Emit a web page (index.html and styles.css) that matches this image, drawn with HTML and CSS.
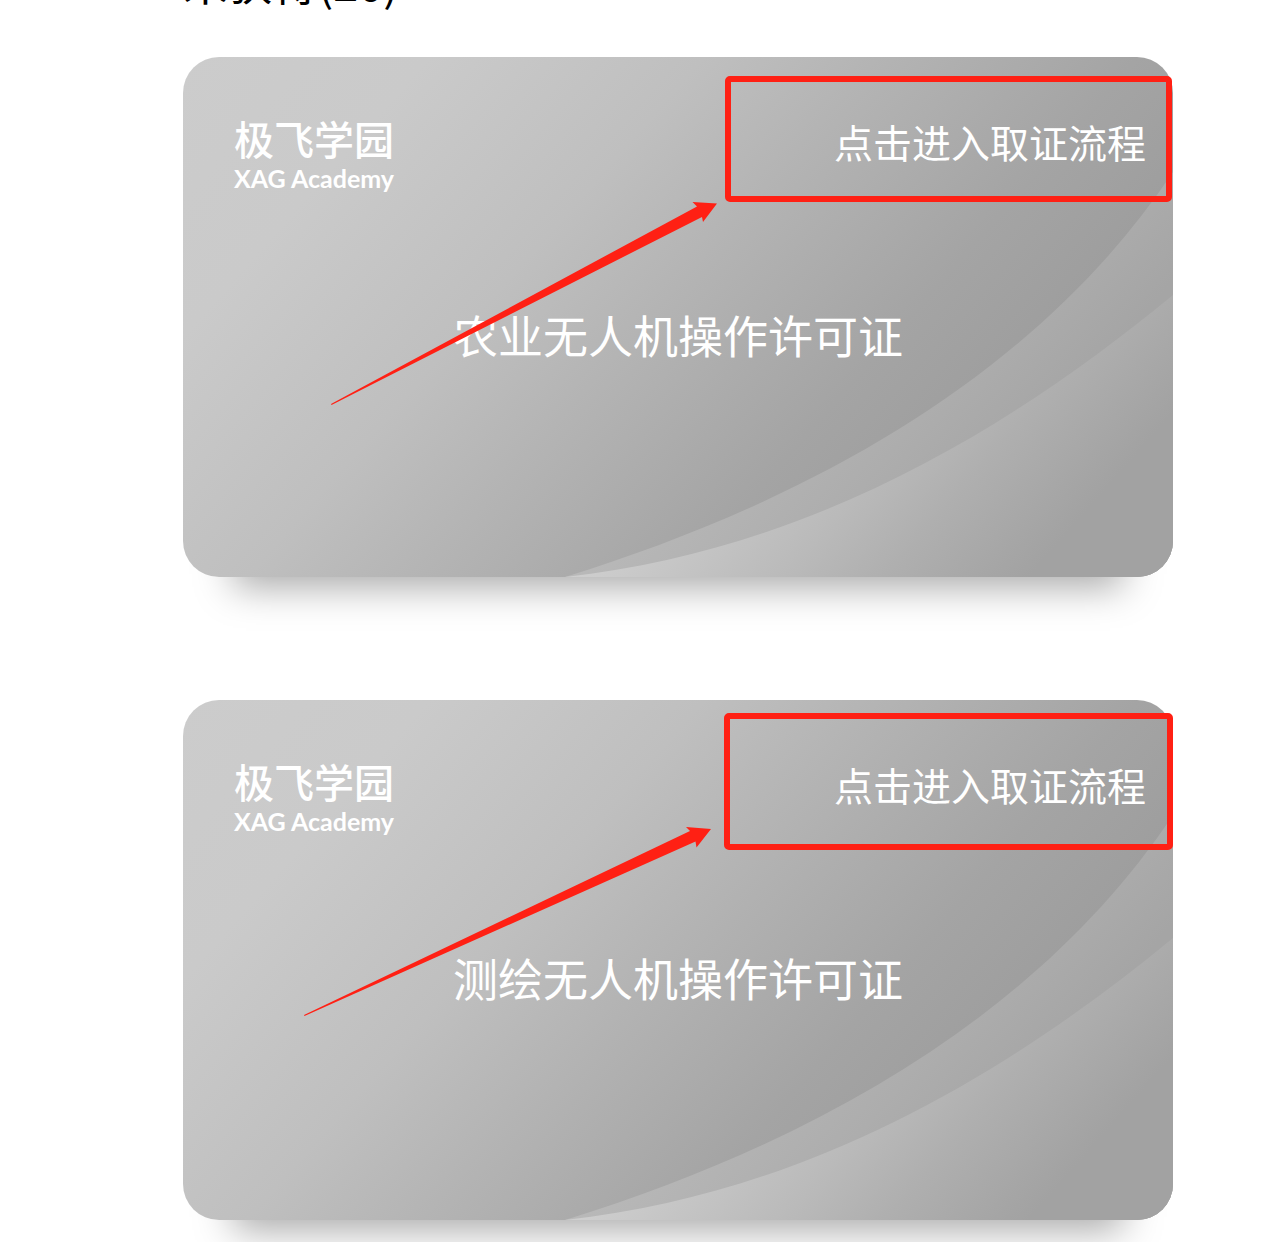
FILE: index.html
```html
<!DOCTYPE html>
<html lang="zh-CN">
<head>
<meta charset="utf-8">
<meta name="viewport" content="width=device-width, initial-scale=1">
<title>极飞学园</title>
<link rel="stylesheet" href="styles.css">
</head>
<body>
<main class="page">
  <header class="section-head"><h1 class="section-title">未获得(20)</h1></header>

  <article class="card">
    <svg class="card-art" viewBox="0 0 990 520" preserveAspectRatio="none" aria-hidden="true">
      <defs>
        <linearGradient id="base" gradientUnits="userSpaceOnUse" x1="0" y1="0" x2="816" y2="718">
          <stop offset="0" stop-color="#cccccc"/>
          <stop offset=".17" stop-color="#cacaca"/>
          <stop offset=".36" stop-color="#bfbfbf"/>
          <stop offset=".48" stop-color="#b4b4b4"/>
          <stop offset=".66" stop-color="#a4a4a4"/>
          <stop offset=".78" stop-color="#9d9d9d"/>
        </linearGradient>
        <linearGradient id="band" gradientUnits="userSpaceOnUse" x1="0" y1="0" x2="816" y2="718">
          <stop offset=".58" stop-color="#b9b9b9"/>
          <stop offset=".73" stop-color="#adadad"/>
          <stop offset=".82" stop-color="#a5a5a5"/>
        </linearGradient>
        <linearGradient id="corner" gradientUnits="userSpaceOnUse" x1="0" y1="0" x2="816" y2="718">
          <stop offset=".58" stop-color="#cfcfcf"/>
          <stop offset=".73" stop-color="#bababa"/>
          <stop offset=".8" stop-color="#afafaf"/>
          <stop offset=".9" stop-color="#a2a2a2"/>
        </linearGradient>
      </defs>
      <rect width="990" height="520" fill="url(#base)"/>
      <path d="M382 520C640 440 860 310 990 115V520Z" fill="url(#band)"/>
      <path d="M382 520C620 494 820 378 990 238V520Z" fill="url(#corner)"/>
    </svg>
    <div class="card-top">
      <div class="brand">
        <span class="brand-cn">极飞学园</span>
        <span class="brand-en">XAG Academy</span>
      </div>
      <a class="card-link" href="#agriculture">点击进入取证流程</a>
    </div>
    <h2 class="card-title">农业无人机操作许可证</h2>
    <svg class="marks" viewBox="0 0 990 520" preserveAspectRatio="none" aria-hidden="true">
      <rect class="mark-box" x="545" y="22" width="441" height="120" rx="2"/>
      <path class="mark-arrow" d="M148 347L514 149.500 509.500 145 534 146.500 520 165 519 160 148.500 348Z"/>
    </svg>
  </article>

  <article class="card">
    <svg class="card-art" viewBox="0 0 990 520" preserveAspectRatio="none" aria-hidden="true">
      <rect width="990" height="520" fill="url(#base)"/>
      <path d="M382 520C640 440 860 310 990 115V520Z" fill="url(#band)"/>
      <path d="M382 520C620 494 820 378 990 238V520Z" fill="url(#corner)"/>
    </svg>
    <div class="card-top">
      <div class="brand">
        <span class="brand-cn">极飞学园</span>
        <span class="brand-en">XAG Academy</span>
      </div>
      <a class="card-link" href="#mapping">点击进入取证流程</a>
    </div>
    <h2 class="card-title">测绘无人机操作许可证</h2>
    <svg class="marks" viewBox="0 0 990 520" preserveAspectRatio="none" aria-hidden="true">
      <rect class="mark-box" x="544" y="16" width="443" height="131" rx="2"/>
      <path class="mark-arrow" d="M121 315L507 131 503 127 528 129 513.500 147.500 512.500 141.500 121.500 316Z"/>
    </svg>
  </article>
</main>
</body>
</html>
```
FILE: styles.css
```css
* {
  box-sizing: border-box;
}

body {
  margin: 0;
  background: #fff;
  color: #000;
  font-family: "Noto Sans CJK SC", sans-serif;
}

.page {
  padding: 0 112px 40px 183px;
}

/* The list is scrolled, so only the foot of the heading shows */
.section-head {
  display: flex;
  align-items: flex-end;
  height: 14px;
  margin-bottom: 43px;
  overflow: hidden;
}

.section-title {
  margin: 0;
  font-size: 45px;
  font-weight: 400;
  line-height: 64px;
}

.card {
  position: relative;
  min-height: 520px;
  margin-bottom: 123px;
  padding-top: 57px;
  border-radius: 36px;
  color: #fff;
  box-shadow: 0 60px 36px -50px rgba(0, 0, 0, 0.34);
}

.card:last-child {
  margin-bottom: 0;
}

.card-art,
.marks {
  position: absolute;
  inset: 0;
  width: 100%;
  height: 100%;
}

.card-art {
  border-radius: 36px;
}

.marks {
  overflow: visible;
  pointer-events: none;
}

.mark-box {
  fill: none;
  stroke: #ff2014;
  stroke-width: 6px;
}

.mark-arrow {
  fill: #ff2014;
}

.card-top {
  position: relative;
  display: flex;
  justify-content: space-between;
  align-items: flex-start;
  padding: 0 27px 0 51px;
}

.brand {
  display: flex;
  flex-direction: column;
}

.brand-cn {
  font-size: 40px;
  font-weight: 500;
  line-height: 48px;
}

.brand-en {
  font-family: Lato, sans-serif;
  font-size: 25px;
  font-weight: 700;
  line-height: 32px;
}

.card-link {
  color: inherit;
  font-size: 39px;
  line-height: 54px;
  text-decoration: none;
}

.card-title {
  position: relative;
  margin: 109px 0 0;
  font-size: 45px;
  font-weight: 400;
  line-height: 64px;
  text-align: center;
}
```
